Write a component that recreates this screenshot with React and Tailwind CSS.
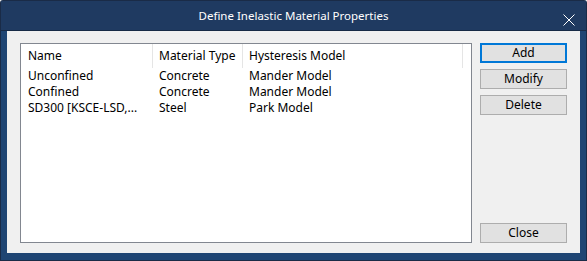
import React from "react";

const rows = [
  ["Unconfined", "Concrete", "Mander Model"],
  ["Confined", "Concrete", "Mander Model"],
  ["SD300 [KSCE-LSD,...", "Steel", "Park Model"],
];

function Btn({ children, primary }) {
  return (
    <div
      className={
        "h-[20px] w-full flex items-center justify-center text-[12px] text-black bg-[#e1e1e1] " +
        (primary ? "border-2 border-[#0078d7]" : "border border-[#adadad]")
      }
    >
      {children}
    </div>
  );
}

export default function App() {
  return (
    <div
      className="w-[587px] h-[261px] bg-[#1a2b47] p-px rounded-t-[3px] overflow-hidden"
      style={{ fontFamily: '"Noto Sans", "Noto Sans CJK KR", sans-serif' }}
    >
      <div className="w-full h-full flex flex-col bg-[#1f4573] rounded-t-[2px]">
        <div className="h-[29px] shrink-0 bg-[#1f3a61] relative flex items-center justify-center border-b border-[#172a46] box-content">
          <span className="text-white text-[11.5px] leading-none">Define Inelastic Material Properties</span>
          <svg className="absolute right-[11px] top-[13px]" width="12" height="12" viewBox="0 0 12 12">
            <path d="M0.5 0.5 L11.5 11.5 M11.5 0.5 L0.5 11.5" stroke="#ffffff" strokeWidth="1" />
          </svg>
        </div>
        <div className="flex-1 px-[6px] pb-[7px] flex">
          <div className="flex-1 bg-[#f0f0f0] pt-[12px] px-[13px] pb-[10px] flex gap-[8px]">
            <div className="flex-1 bg-white border border-[#828790] text-[12px] text-black leading-none">
              <div className="h-[24px] flex items-center">
                <div className="w-[132px] h-full flex items-center pl-[7px] border-r border-[#e5e5e5]">Name</div>
                <div className="w-[90px] h-full flex items-center pl-[6px] border-r border-[#e5e5e5]">Material Type</div>
                <div className="w-[220px] h-full flex items-center pl-[6px] border-r border-[#e5e5e5]">Hysteresis Model</div>
              </div>
              {rows.map((r, i) => (
                <div key={i} className="h-[16px] flex items-center">
                  <div className="w-[132px] pl-[7px]">{r[0]}</div>
                  <div className="w-[90px] pl-[6px]">{r[1]}</div>
                  <div className="pl-[6px]">{r[2]}</div>
                </div>
              ))}
            </div>
            <div className="w-[87px] flex flex-col gap-[6px]">
              <Btn primary>Add</Btn>
              <Btn>Modify</Btn>
              <Btn>Delete</Btn>
              <div className="mt-auto">
                <Btn>Close</Btn>
              </div>
            </div>
          </div>
        </div>
      </div>
    </div>
  );
}
